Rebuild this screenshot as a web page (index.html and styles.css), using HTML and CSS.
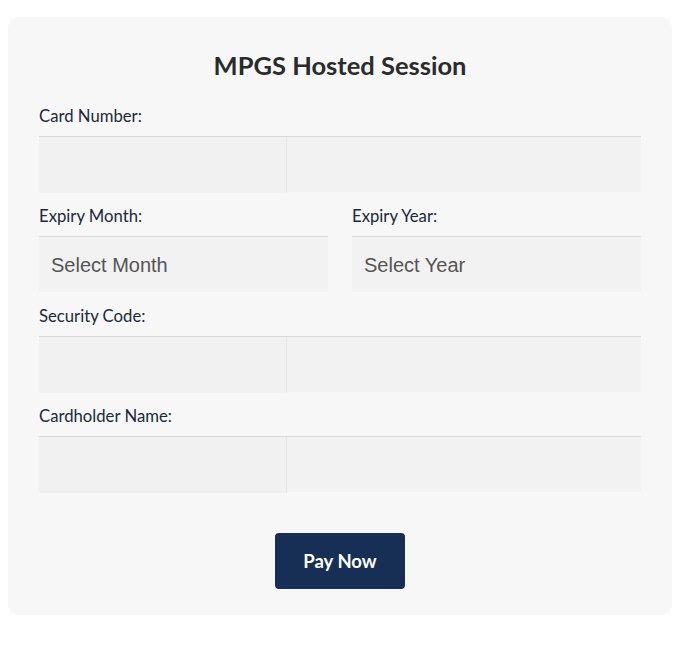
FILE: index.html
```html
<!DOCTYPE html>
<html lang="en">
<head>
<meta charset="utf-8">
<title>MPGS Hosted Session</title>
<link rel="stylesheet" href="styles.css">
</head>
<body>
  <div class="card">
    <h2 class="title">MPGS Hosted Session</h2>
    <form class="form">
      <div class="group">
        <label class="label">Card Number:</label>
        <div class="field"><div class="frame"></div></div>
      </div>
      <div class="row">
        <div class="group">
          <label class="label">Expiry Month:</label>
          <select class="select"><option>Select Month</option></select>
        </div>
        <div class="group">
          <label class="label">Expiry Year:</label>
          <select class="select"><option>Select Year</option></select>
        </div>
      </div>
      <div class="group">
        <label class="label">Security Code:</label>
        <div class="field"><div class="frame"></div></div>
      </div>
      <div class="group">
        <label class="label">Cardholder Name:</label>
        <div class="field"><div class="frame"></div></div>
      </div>
      <div class="actions">
        <button type="button" class="btn">Pay Now</button>
      </div>
    </form>
  </div>
</body>
</html>
```
FILE: styles.css
```css
* { box-sizing: border-box; }
html, body { background: #ffffff; }
body {
  margin: 17px 9px 0 8px;
  font-family: "Lato", "Noto Sans", sans-serif;
  color: #333;
}
.card {
  background: #f7f7f7;
  border-radius: 10px;
  padding: 30px 31px 25px;
  height: 598px;
}
.title {
  margin: 0 0 21px;
  text-align: center;
  font-size: 25.5px;
  font-weight: 700;
  line-height: 36px;
  color: #2b2b2b;
}
.form { display: flex; flex-direction: column; }
.row {
  display: grid;
  grid-template-columns: 1fr 1fr;
  column-gap: 24px;
}
.group {
  display: flex;
  flex-direction: column;
  margin-bottom: 12px;
}
.label {
  display: block;
  font-size: 16.7px;
  line-height: 24px;
  margin-bottom: 8px;
  color: #22283a;
}
.field {
  height: 56px;
  background: #f2f2f2;
  border-top: 1px solid #d9d9d9;
  display: flex;
}
.frame {
  width: 248px;
  height: 56px;
  border-right: 1px solid #e6e6e6;
  background: #f1f1f1;
}
.select {
  appearance: none;
  -webkit-appearance: none;
  height: 56px;
  width: 100%;
  border: 0;
  border-top: 1px solid #d9d9d9;
  border-radius: 0;
  background: #f2f2f2;
  font-family: "Liberation Sans", Arial, sans-serif;
  font-size: 20px;
  color: #555;
  padding: 0 12px;
  margin: 0;
}
.actions {
  display: flex;
  justify-content: center;
  margin-top: 29px;
}
.btn {
  width: 130px;
  height: 56px;
  border: 0;
  border-radius: 4px;
  background: #172f55;
  color: #fff;
  font-family: "Lato", "Noto Sans", sans-serif;
  font-weight: 700;
  font-size: 18.5px;
}
```
